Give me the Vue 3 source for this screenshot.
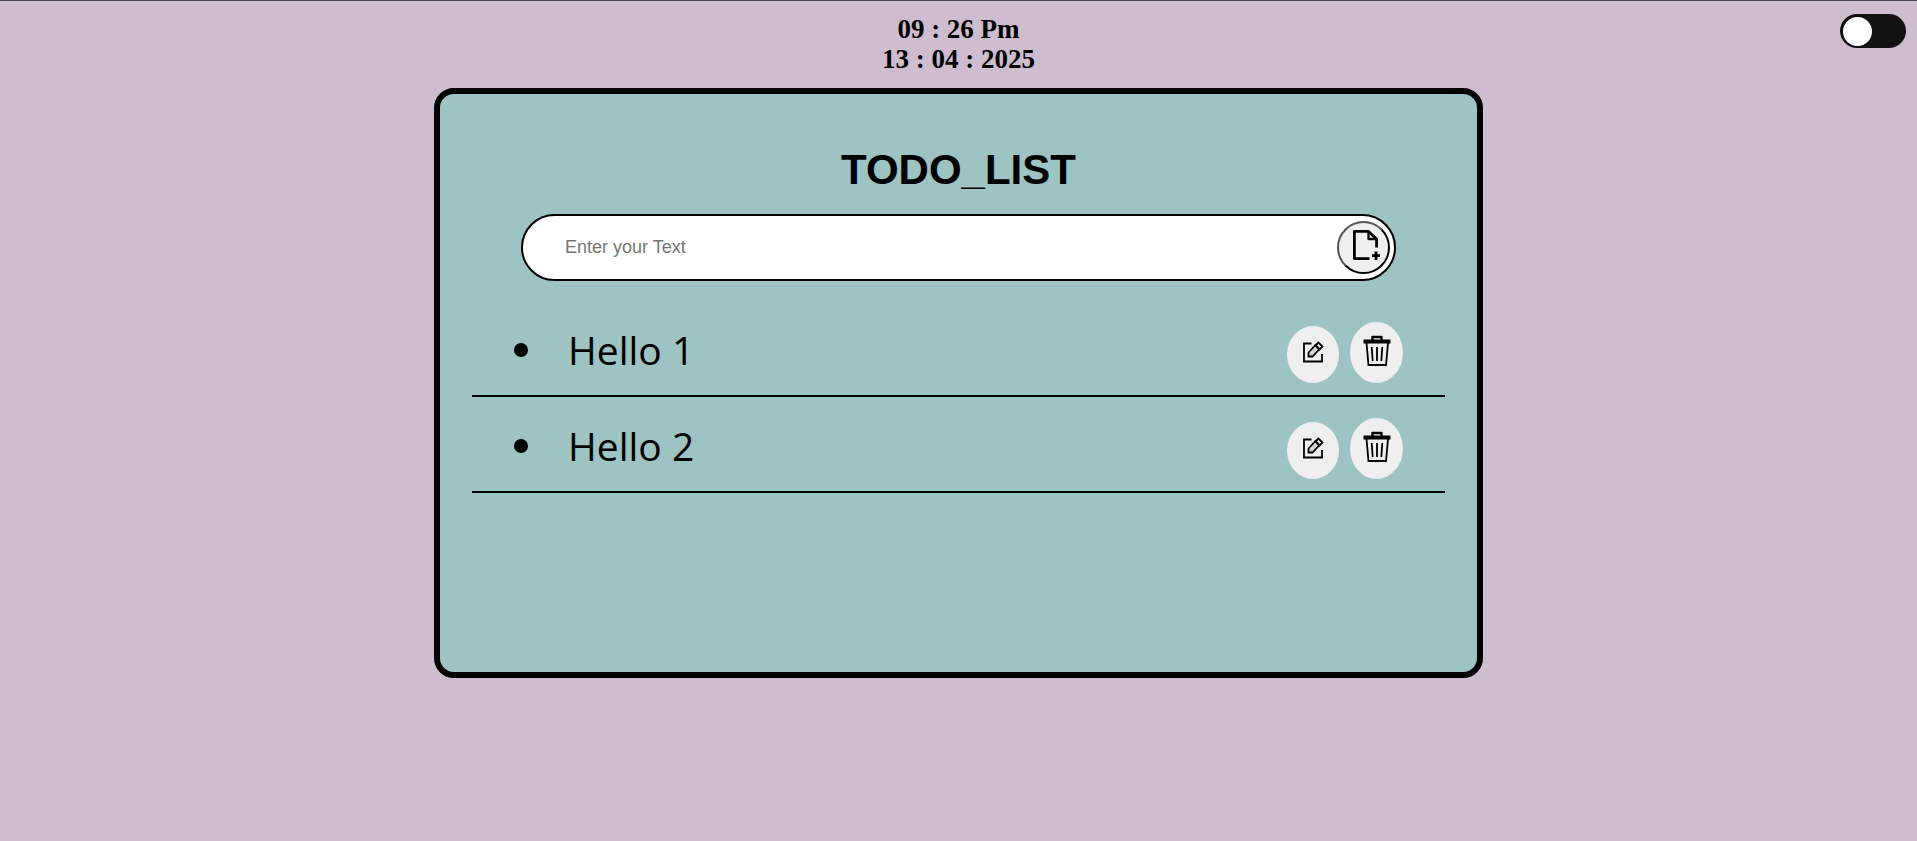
<script setup>
import { ref } from 'vue'

const dark = ref(false)
const draft = ref('')
const todos = ref([
  { id: 1, text: 'Hello 1' },
  { id: 2, text: 'Hello 2' },
])

function addTodo() {
  const text = draft.value.trim()
  if (!text) return
  todos.value.push({ id: Date.now(), text })
  draft.value = ''
}

function removeTodo(id) {
  todos.value = todos.value.filter((t) => t.id !== id)
}

function editTodo(todo) {
  draft.value = todo.text
  removeTodo(todo.id)
}
</script>

<template>
  <div class="page">
    <label class="toggle">
      <input v-model="dark" type="checkbox" aria-label="Dark mode" />
      <span class="knob"></span>
    </label>

    <header class="clock">
      <div>09 : 26 Pm</div>
      <div>13 : 04 : 2025</div>
    </header>

    <main class="card">
      <h1>TODO_LIST</h1>

      <form class="entry" @submit.prevent="addTodo">
        <input v-model="draft" type="text" placeholder="Enter your Text" aria-label="Enter your Text" />
        <button class="add" type="submit" aria-label="Add">
          <svg width="32" height="34" viewBox="0 0 32 34" fill="none" stroke="#000" stroke-width="2.800" stroke-linejoin="round">
            <path d="M21.500 30.600H6.400V3.400H20.500L28.600 11V19.500" />
            <path d="M20.500 3.400V11H28.600" stroke-width="2.300" />
            <path d="M28 23.500v8.500M24 27.700h8" />
          </svg>
        </button>
      </form>

      <ul class="list">
        <li v-for="todo in todos" :key="todo.id">
          <span class="dot"></span>
          <span class="text">{{ todo.text }}</span>
          <button class="edit" type="button" aria-label="Edit" @click="editTodo(todo)">
            <svg width="22" height="22" viewBox="0 0 22 22" fill="none" stroke="#000" stroke-width="1.800">
              <path d="M9.500 2.500H2v18h18v-7.500" />
              <path d="M6.500 11.500l7-7.500 4 4-7 7.500h-4z" fill="#d3d3d3" />
              <path d="M13.500 4.500l3-3 4 4-3 3z" />
            </svg>
          </button>
          <button class="remove" type="button" aria-label="Delete" @click="removeTodo(todo.id)">
            <svg width="28" height="32" viewBox="0 0 28 32" fill="none" stroke="#000">
              <path d="M9.500 5V2h9v3" stroke-width="2.400" stroke-linejoin="round" />
              <path d="M.500 4.500h27v4H.500z" fill="#000" stroke="none" />
              <path d="M3.500 8l2 22h17.500l2-22" stroke-width="1.800" />
              <path d="M8.700 12l1 14M14 12v14M19.300 12l-1 14" stroke-width="1.800" />
            </svg>
          </button>
        </li>
      </ul>
    </main>
  </div>
</template>

<style>
body {
  background: #cebdcf;
}
</style>

<style scoped>
.page {
  position: relative;
  border-top: 1px solid #4b4458;
  color: #000;
}
.toggle {
  position: absolute;
  top: 13px;
  right: 11px;
  width: 66px;
  height: 34px;
  box-sizing: border-box;
  padding: 3px;
  border-radius: 17px;
  background: #111;
  cursor: pointer;
}
.toggle input {
  position: absolute;
  inset: 0;
  width: 100%;
  height: 100%;
  margin: 0;
  opacity: 0;
}
.knob {
  display: block;
  width: 29px;
  height: 29px;
  border-radius: 50%;
  background: #fff;
}
.toggle input:checked + .knob {
  margin-left: auto;
}
.clock {
  padding-top: 13px;
  font: bold 27px/30px "Liberation Serif", serif;
  text-align: center;
}
.card {
  width: 1049px;
  max-width: 100%;
  min-height: 590px;
  box-sizing: border-box;
  margin: 14px auto 0;
  padding: 51px 32px;
  border: 6px solid #000;
  border-radius: 20px;
  background: #9dc3c2;
}
h1 {
  margin: 0;
  font: bold 42px/50px "Liberation Sans", Arial, sans-serif;
  text-align: center;
}
.entry {
  display: flex;
  align-items: center;
  height: 67px;
  box-sizing: border-box;
  margin: 19px 49px 0;
  padding: 0 4px 0 42px;
  border: 2px solid #000;
  border-radius: 34px;
  background: #fff;
}
.entry input {
  flex: 1;
  min-width: 0;
  padding: 0;
  border: 0;
  outline: 0;
  background: transparent;
  font: 18px "Liberation Sans", Arial, sans-serif;
}
.entry input::placeholder {
  color: #757575;
}
button {
  display: flex;
  align-items: center;
  justify-content: center;
  padding: 0;
  border: 0;
  border-radius: 50%;
  background: #efefef;
  color: #000;
  cursor: pointer;
}
.add {
  width: 53px;
  height: 53px;
  padding-bottom: 6px;
  border: 2px outset #000;
}
.list {
  margin: 20px 0 0;
  padding: 0;
  list-style: none;
}
li {
  display: flex;
  align-items: flex-end;
  height: 96px;
  box-sizing: border-box;
  padding: 0 42px 12px;
  border-bottom: 2px solid #000;
}
.dot {
  width: 14px;
  height: 14px;
  margin-bottom: 26px;
  border-radius: 50%;
  background: #000;
}
.text {
  flex: 1;
  padding-left: 40px;
  font: 39px/66px "Open Sans", "Noto Sans", sans-serif;
}
.edit {
  width: 52px;
  height: 57px;
  margin-right: 11px;
  padding-bottom: 6px;
}
.remove {
  width: 53px;
  height: 61px;
  padding-bottom: 4px;
}
</style>
